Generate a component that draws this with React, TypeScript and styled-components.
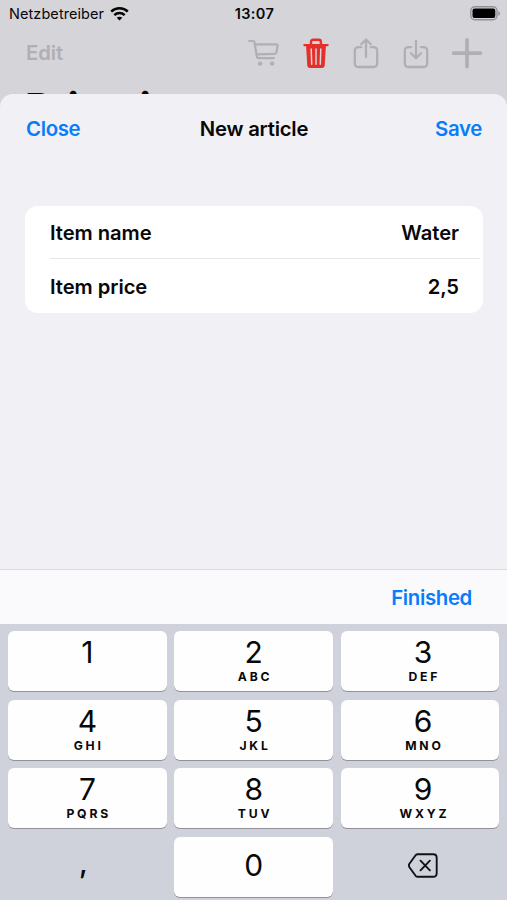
import React from "react";
import styled, { createGlobalStyle } from "styled-components";

const GlobalStyle = createGlobalStyle`
  * { box-sizing: border-box; }
  body { margin: 0; background: #d5d4d9; }
  button { border: 0; padding: 0; background: none; font: inherit; color: inherit; }
`;

const Screen = styled.div`
  width: 507px;
  height: 900px;
  display: flex;
  flex-direction: column;
  overflow: hidden;
  background: #d5d4d9;
  color: #080809;
  font-family: Inter, "Liberation Sans", sans-serif;
`;

const Backdrop = styled.header`
  height: 94px;
  flex: none;
  overflow: hidden;
`;

const StatusBar = styled.div`
  display: grid;
  grid-template-columns: 1fr auto 1fr;
  align-items: center;
  height: 27px;
  padding: 0 6px 0 9px;
  font-size: 14.5px;
  line-height: 18px;
`;

const Carrier = styled.div`
  display: flex;
  align-items: center;
  gap: 6px;
  letter-spacing: 0.07px;
`;

const Clock = styled.div`
  margin-right: 1px;
  font-weight: 600;
  letter-spacing: 0.4px;
`;

const BatterySlot = styled.div`
  display: flex;
  justify-content: flex-end;
`;

const Toolbar = styled.div`
  display: flex;
  align-items: center;
  height: 51px;
  padding: 0 24px 0 26px;
  color: #b0afb3;
`;

const EditButton = styled.button`
  margin-right: auto;
  font-size: 20.3px;
  font-weight: 560;
  letter-spacing: -0.1px;
`;

const ToolIcons = styled.div`
  display: grid;
  grid-template-columns: 54px 51px 50px 48px 32px;
  align-items: center;
  svg { display: block; }
`;

const LargeTitle = styled.h1`
  margin: 5px 0 0 25px;
  font-size: 41.6px;
  line-height: 50px;
  font-weight: 700;
  letter-spacing: -0.8px;
`;

const Sheet = styled.main`
  height: 475px;
  flex: none;
  border-radius: 13px 13px 0 0;
  background: #f1f0f5;
`;

const SheetHeader = styled.div`
  display: grid;
  grid-template-columns: 1fr auto 1fr;
  align-items: center;
  height: 69px;
  padding: 0 25px 0 26px;
  font-size: 20.5px;
`;

const SheetTitle = styled.h2`
  margin: 0;
  font-size: 20.3px;
  font-weight: 600;
  letter-spacing: -0.23px;
`;

const TextButton = styled.button<{ $end?: boolean }>`
  justify-self: ${(p) => (p.$end ? "end" : "start")};
  color: #087dfb;
  font-size: 20.4px;
  font-weight: 560;
  letter-spacing: -0.35px;
`;

const FormCard = styled.section`
  margin: 43px 24px 0 25px;
  border-radius: 13px;
  background: #fff;
  overflow: hidden;
`;

const Field = styled.div<{ $divided?: boolean }>`
  display: flex;
  align-items: center;
  justify-content: space-between;
  height: ${(p) => (p.$divided ? 53 : 54)}px;
  margin: 0 3px 0 25px;
  padding: 0 21px 0 0;
  border-bottom: ${(p) => (p.$divided ? "1px solid #e6e6e9" : "0")};
  font-size: 20.2px;
  font-weight: 590;
  letter-spacing: -0.06px;
`;

const AccessoryBar = styled.div`
  height: 55px;
  flex: none;
  display: flex;
  align-items: center;
  justify-content: flex-end;
  padding-right: 35px;
  border-top: 1px solid #dcdbe0;
  background: #fafafd;
`;

const Keypad = styled.div`
  flex: 1;
  display: grid;
  grid-template-columns: repeat(3, 1fr);
  grid-auto-rows: 60px;
  gap: 8.5px 7.5px;
  padding: 7px 7.5px 0 8px;
  background: #d0d2db;
`;

const Key = styled.button<{ $plain?: boolean; $center?: boolean; $shifted?: boolean }>`
  display: flex;
  flex-direction: column;
  align-items: center;
  justify-content: ${(p) => (p.$center ? "center" : "flex-start")};
  padding-top: ${(p) => (p.$center ? 0 : 4)}px;
  padding-bottom: ${(p) => (p.$center ? 3 : 0)}px;
  padding-left: ${(p) => (p.$shifted ? 6 : 0)}px;
  border-radius: 6px;
  background: ${(p) => (p.$plain ? "transparent" : "#fefefe")};
  box-shadow: ${(p) => (p.$plain ? "none" : "0 1px 0 #919299")};
`;

const Digit = styled.span`
  height: 34px;
  font-size: 30px;
  line-height: 34px;
  font-weight: 400;
`;

const Letters = styled.span`
  height: 15px;
  margin-right: -2.6px;
  font-size: 12.2px;
  line-height: 15px;
  font-weight: 700;
  letter-spacing: 2.8px;
`;

const Comma = styled.span`
  margin: 0 8px 4px 0;
  font-size: 29px;
  line-height: 34px;
  font-weight: 500;
`;

const DeleteSlot = styled.span`
  display: flex;
  margin-top: 1px;
`;

const WifiIcon = () => (
  <svg width="19" height="14" viewBox="0 0 19 14" fill="none" stroke="#050505" strokeWidth="2.5">
    <path d="M1.2 4.6C5.8.2 13.2.2 17.8 4.6" />
    <path d="M4.3 8.1c2.9-2.8 7.5-2.8 10.4 0" />
    <path d="M9.5 13.6 6.7 10.8c1.6-1.5 4-1.5 5.6 0Z" fill="#050505" stroke="none" />
  </svg>
);

const BatteryIcon = () => (
  <svg width="31" height="15" viewBox="0 0 31 15">
    <rect x=".8" y=".8" width="26.2" height="13" rx="4" fill="none" stroke="#929196" strokeWidth="1.4" />
    <rect x="2.5" y="2.5" width="22.8" height="9.6" rx="2" fill="#000" />
    <path d="M28.3 5v4.8c2.2-.7 2.2-4.1 0-4.8Z" fill="#929196" />
  </svg>
);

const CartIcon = () => (
  <svg width="32" height="32" viewBox="0 0 32 32" fill="none" stroke="currentColor" strokeWidth="2.2" strokeLinecap="round" strokeLinejoin="round">
    <path d="M1.2 4h4.2c.6 0 .9.3 1 .9l2.4 14.4c.2 1.2.9 1.9 2.1 1.9h15" />
    <path d="M7 7.3h21.5c.8 0 1.2.5 1.1 1.2l-1.1 6.4c-.2 1.2-.9 1.8-2.1 1.9l-17.5.6" />
    <circle cx="12.1" cy="26.6" r="2.2" fill="currentColor" stroke="none" />
    <circle cx="24.1" cy="26.6" r="2.2" fill="currentColor" stroke="none" />
  </svg>
);

const TrashIcon = () => (
  <svg width="28" height="32" viewBox="0 0 28 32" fill="none" stroke="#e52f2b" strokeLinecap="round" strokeLinejoin="round">
    <path d="M2.4 8.2h23.2" strokeWidth="2.2" />
    <path d="M9 7.5V5c0-1.4.8-2.2 2.2-2.2h5.5c1.4 0 2.2.8 2.2 2.2v2.5" strokeWidth="2.4" />
    <path d="m4.1 9 1.2 19.3c.1 1.7 1 2.6 2.7 2.6h12c1.7 0 2.6-.9 2.7-2.6L23.9 9Z" fill="#e52f2b" stroke="none" />
    <path d="m9.2 12 .5 15.3M14 12v15.3M18.8 12l-.5 15.3" stroke="#d8d4d9" strokeWidth="1.5" />
  </svg>
);

const TransferIcon = ({ down = false }: { down?: boolean }) => (
  <svg width="26" height="32" viewBox="0 0 26 32" fill="none" stroke="currentColor" strokeWidth="2.3" strokeLinecap="round" strokeLinejoin="round">
    <path d="M8.2 10.2H5.5c-2.5 0-3.7 1.2-3.7 3.7v12.4c0 2.5 1.2 3.7 3.7 3.7h15c2.5 0 3.7-1.2 3.7-3.7V13.9c0-2.5-1.2-3.7-3.7-3.7h-2.7" />
    <path d={down ? "M13 4v17M8 16.2l5 5 5-5" : "M13 20V2.7M8.2 7.3 13 2.5l4.8 4.8"} />
  </svg>
);

const PlusIcon = () => (
  <svg width="32" height="32" viewBox="0 0 32 32" fill="none" stroke="currentColor" strokeWidth="3.7" strokeLinecap="round">
    <path d="M16 2.8v26.8M2.6 16.2h26.8" />
  </svg>
);

const DeleteIcon = () => (
  <svg width="30" height="25" viewBox="0 0 30 25" fill="none" stroke="#111216" strokeWidth="1.9" strokeLinecap="round" strokeLinejoin="round">
    <path d="M9.8 1.2h15.4c2.4 0 3.5 1.1 3.5 3.5v15.6c0 2.4-1.1 3.5-3.5 3.5H9.8c-.9 0-1.5-.3-2.2-1l-6-8.3c-.8-1.1-.8-2.9 0-4l6-8.3c.7-.7 1.3-1 2.2-1Z" />
    <path d="m12.5 7.7 9.4 9.6M21.9 7.7l-9.4 9.6" />
  </svg>
);

const KEYS: [string, string][] = [
  ["1", ""], ["2", "ABC"], ["3", "DEF"],
  ["4", "GHI"], ["5", "JKL"], ["6", "MNO"],
  ["7", "PQRS"], ["8", "TUV"], ["9", "WXYZ"],
];

const FIELDS = [
  { label: "Item name", value: "Water" },
  { label: "Item price", value: "2,5" },
];

export default function App() {
  return (
    <>
      <GlobalStyle />
      <Screen>
        <Backdrop>
          <StatusBar>
            <Carrier>Netzbetreiber <WifiIcon /></Carrier>
            <Clock>13:07</Clock>
            <BatterySlot><BatteryIcon /></BatterySlot>
          </StatusBar>
          <Toolbar>
            <EditButton>Edit</EditButton>
            <ToolIcons>
              <CartIcon />
              <TrashIcon />
              <TransferIcon />
              <TransferIcon down />
              <PlusIcon />
            </ToolIcons>
          </Toolbar>
          <LargeTitle>Privati</LargeTitle>
        </Backdrop>
        <Sheet>
          <SheetHeader>
            <TextButton>Close</TextButton>
            <SheetTitle>New article</SheetTitle>
            <TextButton $end>Save</TextButton>
          </SheetHeader>
          <FormCard>
            {FIELDS.map((f, i) => (
              <Field key={f.label} $divided={i < FIELDS.length - 1}>
                <span>{f.label}</span>
                <span>{f.value}</span>
              </Field>
            ))}
          </FormCard>
        </Sheet>
        <AccessoryBar><TextButton $end>Finished</TextButton></AccessoryBar>
        <Keypad>
          {KEYS.map(([digit, letters], i) => (
            <Key key={digit} $shifted={i % 3 === 2}>
              <Digit>{digit}</Digit>
              {letters && <Letters>{letters}</Letters>}
            </Key>
          ))}
          <Key $plain $center><Comma>,</Comma></Key>
          <Key $center><Digit>0</Digit></Key>
          <Key $plain $center $shifted aria-label="Delete"><DeleteSlot><DeleteIcon /></DeleteSlot></Key>
        </Keypad>
      </Screen>
    </>
  );
}
